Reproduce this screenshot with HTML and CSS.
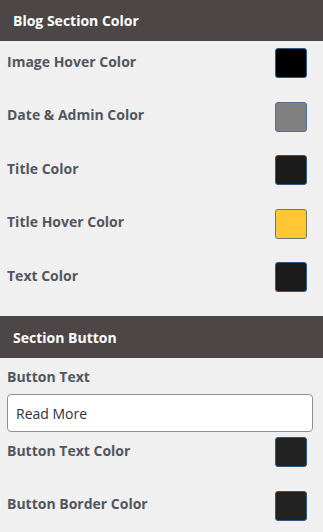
FILE: index.html
```html
<!DOCTYPE html>
<html lang="en">
<head>
    <meta charset="UTF-8">
    <meta name="viewport" content="width=device-width, initial-scale=1.0">
    <title>Blog Section Color</title>
    <link rel="stylesheet" href="styles.css">
</head>
<body>
    <div class="panel">
        <h2 class="section-title">Blog Section Color</h2>

        <div class="color-list">
            <div class="color-row">
                <span class="label">Image Hover Color</span>
                <span class="swatch swatch-black"></span>
            </div>
            <div class="color-row">
                <span class="label">Date &amp; Admin Color</span>
                <span class="swatch swatch-gray"></span>
            </div>
            <div class="color-row">
                <span class="label">Title Color</span>
                <span class="swatch swatch-dark"></span>
            </div>
            <div class="color-row">
                <span class="label">Title Hover Color</span>
                <span class="swatch swatch-yellow"></span>
            </div>
            <div class="color-row">
                <span class="label">Text Color</span>
                <span class="swatch swatch-dark"></span>
            </div>
        </div>

        <h2 class="section-title section-title-second">Section Button</h2>

        <div class="field">
            <label class="label" for="buttonText">Button Text</label>
            <input type="text" id="buttonText" value="Read More">
        </div>

        <div class="color-list color-list-tight">
            <div class="color-row">
                <span class="label">Button Text Color</span>
                <span class="swatch swatch-button"></span>
            </div>
            <div class="color-row">
                <span class="label">Button Border Color</span>
                <span class="swatch swatch-button"></span>
            </div>
        </div>
    </div>
</body>
</html>
```

FILE: styles.css
```css
body {
    margin: 0;
    padding: 0;
    background-color: #f0f0f1;
    font-family: "Open Sans", "Noto Sans", sans-serif;
    color: #50575e;
}

.panel {
    width: 323px;
}

.section-title {
    margin: 0;
    height: 41px;
    padding-left: 13px;
    display: flex;
    align-items: center;
    background-color: #4c4746;
    color: #fff;
    font-size: 14px;
    font-weight: bold;
}

.section-title-second {
    height: 42px;
    margin-top: 24px;
}

.color-list {
    display: flex;
    flex-direction: column;
    gap: 23.5px;
    padding: 7px 16px 0 7px;
}

.color-list-tight {
    padding-top: 5px;
}

.color-row {
    display: flex;
    align-items: center;
    justify-content: space-between;
    height: 30px;
}

.color-row .label {
    padding-bottom: 4px;
}

.label {
    font-size: 14px;
    font-weight: bold;
    color: #50575e;
}

.swatch {
    width: 30px;
    height: 28px;
    border: 1px solid #2c5a84;
    border-radius: 3px;
}

.swatch-black {
    background-color: #000;
}

.swatch-gray {
    background-color: #808080;
    border-color: #4f7396;
}

.swatch-dark {
    background-color: #1b1b1b;
}

.swatch-yellow {
    background-color: #ffc733;
    border-color: #6b7a70;
}

.swatch-button {
    background-color: #222;
}

.field {
    padding: 9px 10px 0 7px;
}

.field .label {
    display: block;
    margin-bottom: 8px;
}

input[type="text"] {
    box-sizing: border-box;
    width: 306px;
    height: 38px;
    padding: 0 8px;
    border: 1px solid #8c8f94;
    border-radius: 4px;
    background-color: #fff;
    font-family: "Open Sans", "Noto Sans", sans-serif;
    font-size: 14px;
    color: #2c3338;
}
```
